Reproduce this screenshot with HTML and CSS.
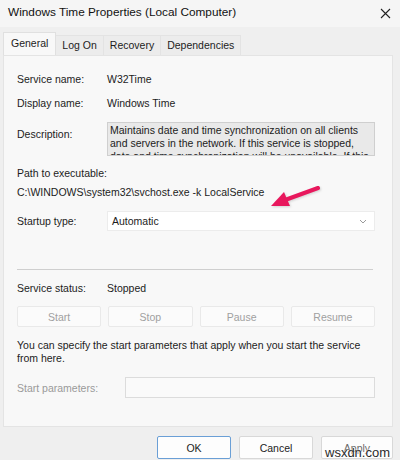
FILE: index.html
```html
<!DOCTYPE html>
<html lang="en">
<head>
  <meta charset="UTF-8" />
  <title>Windows Time Properties (Local Computer)</title>
  <link rel="stylesheet" href="styles.css">
</head>
<body>

<div class="window">
  <div class="titlebar">
    <span class="title">Windows Time Properties (Local Computer)</span>
    <svg class="close" width="11" height="11" viewBox="0 0 11 11">
      <path d="M1 1 L10 10 M10 1 L1 10" stroke="#222" stroke-width="1.1" fill="none"/>
    </svg>
  </div>

  <div class="content">
    <div class="tabs">
      <div class="tab active">General</div>
      <div class="tab">Log On</div>
      <div class="tab">Recovery</div>
      <div class="tab">Dependencies</div>
    </div>

    <div class="panel">
      <div class="row first">
        <span class="label">Service name:</span>
        <span>W32Time</span>
      </div>
      <div class="row second">
        <span class="label">Display name:</span>
        <span>Windows Time</span>
      </div>
      <div class="row desc-row">
        <span class="label desc-label">Description:</span>
        <div class="desc-box">Maintains date and time synchronization on all clients and servers in the network. If this service is stopped, date and time synchronization will be unavailable. If this service is disabled, any services that explicitly depend on it will fail to start.</div>
      </div>
      <div class="path-label">Path to executable:</div>
      <div class="path-value">C:\WINDOWS\system32\svchost.exe -k LocalService</div>
      <div class="row startup">
        <span class="label">Startup type:</span>
        <div class="select">
          <span>Automatic</span>
          <svg width="8" height="5" viewBox="0 0 8 5">
            <path d="M1 1 L4 4 L7 1" stroke="#9a9a9a" stroke-width="1" fill="none"/>
          </svg>
        </div>
      </div>

      <hr class="sep">

      <div class="row status">
        <span class="label">Service status:</span>
        <span>Stopped</span>
      </div>
      <div class="svc-buttons">
        <button disabled>Start</button>
        <button disabled>Stop</button>
        <button disabled>Pause</button>
        <button disabled>Resume</button>
      </div>
      <p class="note">You can specify the start parameters that apply when you start the service from here.</p>
      <div class="row params">
        <span class="label muted">Start parameters:</span>
        <div class="param-box"></div>
      </div>

      <!-- pink pointer at the startup type -->
      <svg class="arrow" width="54" height="28" viewBox="0 0 54 28">
        <path d="M49 5 L16 17" stroke="#e8185d" stroke-width="4" stroke-linecap="round" fill="none"/>
        <path d="M2 23 L15 9 L21 23 Z" fill="#e8185d"/>
      </svg>
    </div>

    <div class="actions">
      <button class="default">OK</button>
      <button>Cancel</button>
      <button class="apply">Apply</button>
    </div>
  </div>

  <span class="watermark">wsxdn.com</span>
</div>

</body>
</html>
```

FILE: styles.css
```css
body {
  margin: 0;
  font-family: "Liberation Sans", Arial, sans-serif;
  font-size: 10.5px;
  color: #1c1c1c;
  background: #efefef;
}
.window {
  position: relative;
  width: 400px;
  height: 460px;
  overflow: hidden;
  background: #efefef;
}
.titlebar {
  height: 24px;
  display: flex;
  align-items: center;
  justify-content: space-between;
  padding: 0 9px 3px 8px;
  background: #f5f5f5;
}
.title {
  font-size: 11.8px;
  color: #111;
}
.close {
  margin-top: 2px;
}
.content {
  padding: 0 7px 0 3px;
}
.tabs {
  display: flex;
  align-items: flex-end;
  height: 28px;
}
.tab {
  height: 19px;
  line-height: 18px;
  padding: 0 6px;
  background: #ececec;
  border: 1px solid #e3e3e3;
  border-bottom: none;
  margin-left: -1px;
  color: #1c1c1c;
}
.tab.active {
  height: 22px;
  line-height: 20px;
  padding: 0 7px;
  margin-left: 0;
  background: #f8f8f8;
  border-color: #e0e0e0;
  position: relative;
  z-index: 1;
}
.panel {
  position: relative;
  height: 372px;
  box-sizing: border-box;
  background: #f8f8f8;
  border: 1px solid #e4e4e4;
  padding: 13px 17px 0 13px;
}
.row {
  display: flex;
  align-items: center;
}
.label {
  width: 90px;
  flex: none;
}
.muted {
  color: #9a9a9a;
}
.first, .second {
  height: 20px;
}
.second {
  margin-top: 4px;
}
.desc-row {
  align-items: flex-start;
  margin-top: 9px;
}
.desc-label {
  padding-top: 6px;
}
.desc-box {
  flex: 1;
  height: 34px;
  overflow: hidden;
  box-sizing: border-box;
  padding: 1px 2px;
  line-height: 13px;
  background: #e9e9e9;
  border: 1px solid #cfcfcf;
}
.path-label {
  margin-top: 10px;
  line-height: 14px;
}
.path-value {
  margin-top: 5px;
  line-height: 14px;
}
.startup {
  margin-top: 12px;
}
.select {
  flex: 1;
  height: 20px;
  box-sizing: border-box;
  display: flex;
  align-items: center;
  justify-content: space-between;
  padding: 0 7px 0 4px;
  background: #fff;
  border: 1px solid #ececec;
}
.sep {
  margin: 38px 2px 0 0;
  border: none;
  border-top: 1px solid #cfcfcf;
}
.status {
  margin-top: 11px;
  height: 14px;
}
.svc-buttons {
  display: grid;
  grid-template-columns: repeat(4, 1fr);
  gap: 7px;
  margin-top: 11px;
}
button {
  font-family: inherit;
  font-size: 10.5px;
  height: 21px;
  padding: 0;
  background: #fbfbfb;
  border: 1px solid #e9e9e9;
  border-radius: 2px;
  color: #1c1c1c;
}
button:disabled {
  color: #a0a0a0;
}
.note {
  margin: 12px 0 0;
  line-height: 13px;
}
.params {
  margin-top: 12px;
}
.params .label {
  width: 108px;
}
.param-box {
  flex: 1;
  height: 21px;
  box-sizing: border-box;
  background: #fafafa;
  border: 1px solid #dcdcdc;
}
.arrow {
  position: absolute;
  left: 265px;
  top: 127px;
  filter: drop-shadow(1px 1px 1px rgba(0, 0, 0, 0.15));
}
.actions {
  display: flex;
  justify-content: flex-end;
  gap: 8px;
  margin-top: 9px;
}
.actions button {
  width: 74px;
  height: 23px;
  background: #fdfdfd;
  border: 1px solid #d8d8d8;
}
.actions .default {
  border-color: #6a9fd6;
}
.actions .apply {
  width: 72px;
  color: #6a6a6a;
}
.watermark {
  position: absolute;
  left: 325px;
  top: 445px;
  font-size: 13px;
  color: #2a2a2a;
  text-shadow: 0 0 2px #fff, 0 0 2px #fff;
}
```
